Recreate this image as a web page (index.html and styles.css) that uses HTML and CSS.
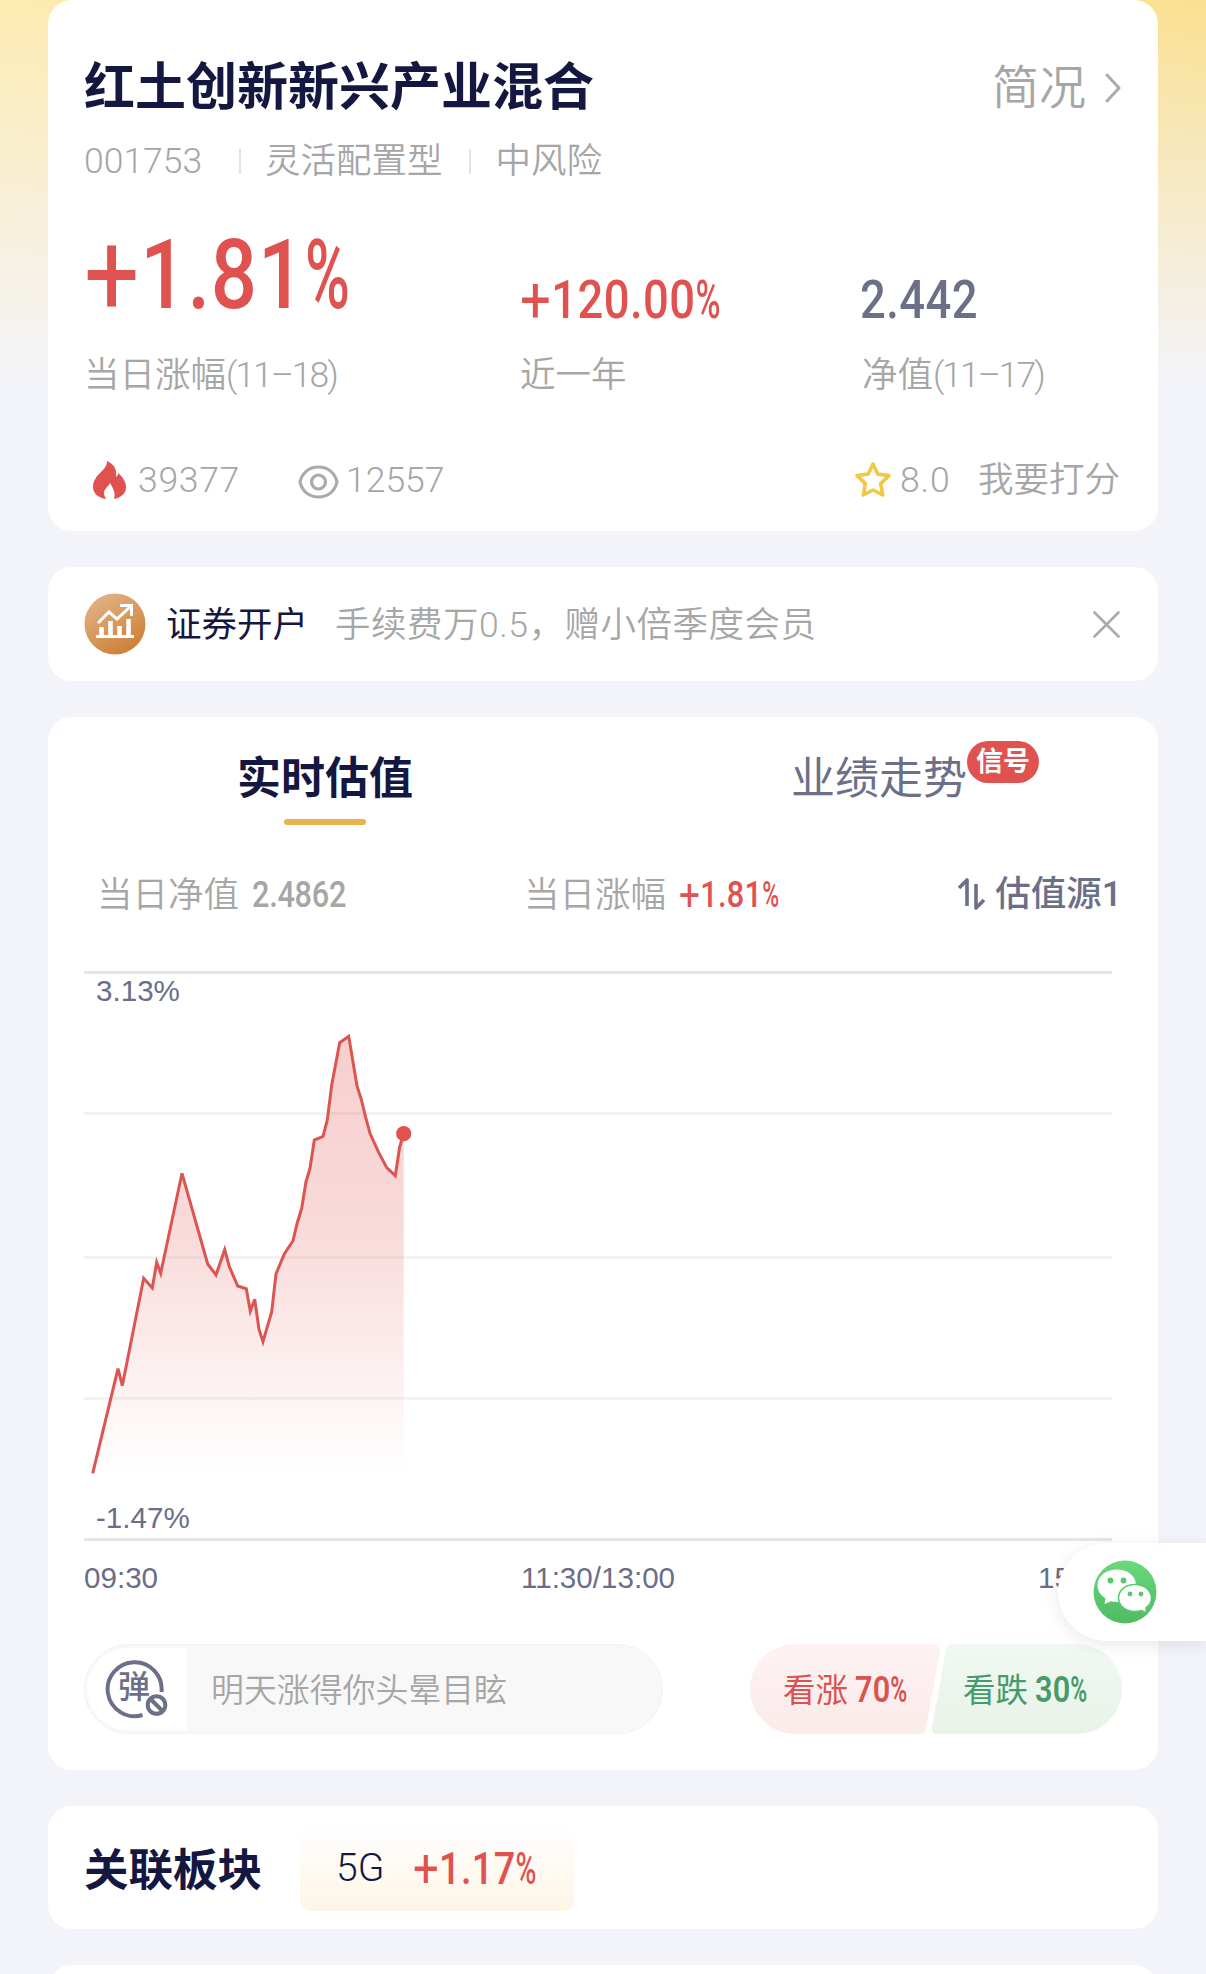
FILE: index.html
```html
<!DOCTYPE html>
<html lang="zh-CN">
<head>
  <meta charset="utf-8" />
  <meta name="viewport" content="width=device-width, initial-scale=1" />
  <title>红土创新新兴产业混合</title>
  <link rel="stylesheet" href="styles.css">
</head>
<body>
  <main class="page">
    <section class="card fund">
      <header class="fund-head">
        <h1>红土创新新兴产业混合</h1>
        <a class="more">简况
          <svg width="16" height="30" viewBox="0 0 16 30"><path d="M2 2l12 13L2 28" fill="none" stroke="#aaa" stroke-width="3" stroke-linecap="round" stroke-linejoin="round"/></svg>
        </a>
      </header>
      <div class="meta">
        <span class="code">001753</span><span class="type">灵活配置型</span><span class="risk">中风险</span>
      </div>
      <div class="figures">
        <div><b class="num num-xl up"><span class="plus">+</span>1.81<span class="pct">%</span></b><span class="label">当日涨幅<span class="date">(11–18)</span></span></div>
        <div><b class="num num-l up"><span class="plus">+</span>120.00<span class="pct">%</span></b><span class="label">近一年</span></div>
        <div><b class="num num-l nav">2.442</b><span class="label">净值<span class="date">(11–17)</span></span></div>
      </div>
      <div class="counts">
        <svg class="fire" width="33" height="38" viewBox="0 0 33 38"><path d="M14 0c7 3 10 8 9 16 2-1 2-3 2-4 5 4 8 9 8 14 0 6-4 10-12 12 2-6-1-11-4-16-2 4-6 6-6 10 0 2 1 4 2 6C5 37 0 32 0 26c0-6 3-10 8-15 3-3 6-6 6-11z" fill="#e0524f"/></svg>
        <span class="hot">39377</span>
        <svg class="eye" width="41" height="34" viewBox="0 0 41 34" fill="none" stroke="#aaa" stroke-width="3.2"><path d="M2 17C4 8 11 2 20.500 2S37 8 39 17C37 26 30 32 20.500 32S4 26 2 17z"/><circle cx="20.500" cy="17" r="7"/></svg>
        <span class="views">12557</span>
        <svg class="star" width="38" height="38" viewBox="0 0 38 38"><path d="M19 3l4.700 10 11.300 1.600-8.300 8 2 11.400L19 29l-9.700 5 2-11.400-8.300-8L14.300 13z" fill="none" stroke="#f2c744" stroke-width="3.600" stroke-linejoin="round"/></svg>
        <span class="score">8.0</span>
        <span>我要打分</span>
      </div>
    </section>

    <section class="card notice">
      <svg width="62" height="62" viewBox="0 0 62 62">
        <defs><linearGradient id="gold" x1="0" y1="0" x2=".6" y2="1"><stop offset="0" stop-color="#e3b891"/><stop offset="1" stop-color="#cf8238"/></linearGradient></defs>
        <circle cx="31" cy="31" r="30.500" fill="url(#gold)"/>
        <path d="M12 43.500h38" fill="none" stroke="#fff" stroke-width="3"/>
        <path d="M17.500 44V34M26.500 44V28M35.500 44V33M44.500 44V26" fill="none" stroke="#fff" stroke-width="4.600"/>
        <path d="M14 30l11-11 8 7 14-13M36 12.500h11.500V23" fill="none" stroke="#fff" stroke-width="3"/>
      </svg>
      <strong>证券开户</strong>
      <span>手续费万0.5，赠小倍季度会员</span>
      <svg class="close" width="27" height="27" viewBox="0 0 27 27"><path d="M1.500 1.500l24 24M25.500 1.500l-24 24" stroke="#aaa" stroke-width="2.600" stroke-linecap="round"/></svg>
    </section>

    <section class="card trend">
      <nav class="tabs">
        <a class="tab active">实时估值</a>
        <a class="tab">业绩走势<i class="badge">信号</i></a>
      </nav>
      <div class="summary">
        <div class="sum-a">当日净值<b class="num num-s">2.4862</b></div>
        <div class="sum-b">当日涨幅<b class="num num-s up"><span class="plus">+</span>1.81<span class="pct">%</span></b></div>
        <div class="source">
          <svg width="28" height="34" viewBox="0 0 28 34"><path d="M1 11l8-8v26M26 23l-8 8V7" fill="none" stroke="#6b7088" stroke-width="3.600" stroke-linejoin="round"/></svg>估值源1
        </div>
      </div>

      <div class="chart">
        <svg width="1028" height="571" viewBox="0 0 1028 571">
          <defs>
            <linearGradient id="area" gradientUnits="userSpaceOnUse" x1="0" y1="66" x2="0" y2="503">
              <stop offset="0" stop-color="#e0524f" stop-opacity=".28"/>
              <stop offset=".45" stop-color="#e0524f" stop-opacity=".21"/>
              <stop offset="1" stop-color="#e0524f" stop-opacity="0"/>
            </linearGradient>
          </defs>
          <path d="M0 143.500H1028M0 287.500H1028M0 428.500H1028" stroke="#f3f3f5" stroke-width="3"/>
          <path d="M0 2.500H1028M0 569.500H1028" stroke="#e5e5ea" stroke-width="3"/>
          <path id="fill" fill="url(#area)"/>
          <polyline id="line" fill="none" stroke="#dc5551" stroke-width="3"/>
          <circle cx="319.700" cy="163.700" r="7.600" fill="#e0524f"/>
        </svg>
        <span class="max">3.13%</span>
        <span class="min">-1.47%</span>
      </div>
      <div class="times"><span>09:30</span><span>11:30/13:00</span><span>15:00</span></div>

      <div class="bottom">
        <div class="danmu">
          <div class="danmu-switch">
            <svg width="66" height="62" viewBox="0 0 66 62">
              <g fill="none" stroke="#6b7088" stroke-width="4">
                <path d="M37.500 57A27 27 0 1 1 56.500 34"/>
                <circle cx="51.500" cy="47" r="8.800"/>
                <path d="M45.500 41l12 12"/>
              </g>
              <text x="13" y="40" class="danmu-char">弹</text>
            </svg>
          </div>
          <span>明天涨得你头晕目眩</span>
        </div>
        <div class="vote">
          <svg width="372" height="90" viewBox="0 0 372 90">
            <defs>
              <linearGradient id="bull" x1="0" y1="0" x2="0" y2="1"><stop offset="0" stop-color="#fdf2f3"/><stop offset="1" stop-color="#fbebea"/></linearGradient>
              <linearGradient id="bear" x1="0" y1="0" x2="0" y2="1"><stop offset="0" stop-color="#f1f8f3"/><stop offset="1" stop-color="#e8f3e8"/></linearGradient>
            </defs>
            <path d="M45 0H184Q191 0 190 7L176 84Q175 90 169 90H45A45 45 0 0 1 45 0z" fill="url(#bull)"/>
            <path d="M203 0H327A45 45 0 0 1 327 90H188Q181 90 182 83L196 6Q197 0 203 0z" fill="url(#bear)"/>
          </svg>
          <div class="vote-text"><span class="bull">看涨<b class="num num-s">70<span class="pct">%</span></b></span><span class="bear">看跌<b class="num num-s">30<span class="pct">%</span></b></span></div>
        </div>
      </div>
    </section>

    <section class="card sector">
      <h2>关联板块</h2>
      <div class="tag"><span class="name">5G</span><b class="num num-m up"><span class="plus">+</span>1.17<span class="pct">%</span></b></div>
    </section>

    <section class="card next"></section>
  </main>

  <div class="wechat">
    <svg width="64" height="64" viewBox="0 0 64 64">
      <defs><linearGradient id="wx" x1="0" y1="0" x2="0" y2="1"><stop offset="0" stop-color="#6ad97c"/><stop offset="1" stop-color="#4fbb63"/></linearGradient></defs>
      <circle cx="32" cy="32" r="31.500" fill="url(#wx)"/>
      <path d="M24 9.500c11 0 19 6.500 19 16S35 42 24 42c-2 0-4-.2-6-.8L11.500 44l1-5.800C7.500 35 4.500 31 4.500 25.500c0-9.500 8.500-16 19.500-16z" fill="#fff"/>
      <path d="M42 24.500c9.500 0 16.500 6 16.500 13.500 0 4-2 7.500-5.500 10l.6 5-5-2.500c-2 .6-4.300 1-6.600 1-9.500 0-16.500-6-16.500-13.500s7-13.500 16.500-13.500z" fill="#fff" stroke="#5cc870" stroke-width="1.600"/>
      <g fill="#58c66b"><circle cx="17.500" cy="20.500" r="2.900"/><circle cx="30.500" cy="20.500" r="2.900"/><circle cx="37" cy="34" r="2.400"/><circle cx="48" cy="34" r="2.400"/></g>
    </svg>
  </div>

  <script>
    // intraday estimate, in chart pixels
    const points = [
      [8.7,503.3],[34,398.7],[38.3,415.7],[59.7,308.3],[68.3,318],[72.7,292.3],[76.7,303.3],[98,203.3],
      [123.7,294],[132,305],[140.7,279.7],[145.3,296.7],[153.7,316],[162.3,318.7],[166.3,341.3],[170.7,329.3],
      [175,359.3],[179,371.7],[187.7,341.7],[192,304],[200.3,284],[209,270.7],[213.3,252.7],[217.7,238.3],
      [222,211.7],[226,198.3],[230.3,170],[239,166.3],[243.3,150],[247.7,115],[255.7,72.7],[264.7,66.3],
      [273,116],[277.3,129.3],[281.7,147.3],[286,163.3],[294.3,181.7],[302.7,197.7],[311.3,205.7],[315.7,176.7],[319.7,163.7]
    ];
    const line = points.map(p => p.join(',')).join(' ');
    document.getElementById('line').setAttribute('points', line);
    document.getElementById('fill').setAttribute('d', `M${line} V503H8.7z`);
  </script>
</body>
</html>
```
FILE: styles.css
```css
*{box-sizing:border-box}
body{margin:0;height:1974px;overflow:hidden;background:linear-gradient(rgba(243,244,250,0),#f3f4fa 385px),linear-gradient(90deg,#fdebb2,#fae092);color:#14173f;font-family:Roboto,"Noto Sans CJK SC",sans-serif;font-size:35.5px;position:relative}
h1,h2{margin:0;font-weight:500}
svg{display:block;flex:none}
.page{display:flex;flex-direction:column;gap:36px;padding:0 48px}
.card{background:#fff;border-radius:24px;padding:0 36px}

/* Roboto squeezed to a DIN-like width */
.num{display:inline-block;font-family:Roboto,sans-serif;font-weight:500;letter-spacing:.01em;transform:scaleX(.84);transform-origin:left;white-space:nowrap}
.plus{font-size:1.2em;font-weight:400;line-height:0;vertical-align:-.06em}
.pct{display:inline-block;transform:scaleX(.75);transform-origin:left}
.num-xl{font-size:97px}
.num-l{font-size:54px}
.num-m{font-size:45px}
.num-s{font-size:36.5px}
.up{color:#e0524f}
.nav{margin-left:-2px;color:#6b7088}

.fund{height:531px;color:#a6a6a6;font-weight:350}
.fund-head{display:flex;justify-content:space-between;height:124px;padding-top:52px;line-height:72px}
.fund-head h1{font-size:51px;font-weight:600;color:#14173f}
.more{display:flex;align-items:center;gap:19px;height:72px;padding-right:1px;font-size:47px}
.meta{display:flex;height:75px;line-height:75px}
.meta span+span{display:flex;align-items:center;height:75px}
.meta span+span::before{content:"";width:2px;height:25px;background:#e2e2e2}
.code{width:155px}
.type::before{margin-right:24px}
.risk::before{margin:0 25px 0 26px}
.figures{display:grid;grid-template-columns:436px 342px 1fr;height:206px}
.figures div{display:flex;flex-direction:column}
.figures .num{height:150px;line-height:202px}
.figures .num-xl{line-height:153px}
.label{line-height:52px}
.date{letter-spacing:-2px}
.counts{display:flex;align-items:center;height:68px;line-height:68px;margin-top:41px;padding-right:2px}
.fire{margin:0 12px 0 9px}
.hot{width:160px;letter-spacing:.7px}
.eye{margin:3px 7px 0 0}
.star{margin:0 8px 0 auto}
.score{width:78px;letter-spacing:.9px}

.notice{display:flex;align-items:center;height:114px;color:#a6a6a6;font-weight:350}
.notice strong{margin:-5px 27px 0 20px;color:#14173f;font-weight:400}
.notice span{margin-top:-5px;letter-spacing:.5px}
.close{margin:0 2px 0 auto}

.trend{height:1053px}
.tabs{display:grid;grid-template-columns:482px 1fr;height:139px}
.tab{position:relative;justify-self:center;height:108px;padding-top:10px;font-size:44px;line-height:104px;color:#6b7088;font-weight:400}
.tab:last-child{left:35px}
.active{color:#14173f;font-weight:600}
.active::after{content:"";position:absolute;left:50%;bottom:0;width:82px;height:6px;margin-left:-41px;border-radius:3px;background:#eab34f}
.badge{position:absolute;left:100%;top:24px;width:72px;height:42px;border-radius:21px;background:#e0524f;color:#fff;font-size:27px;font-style:normal;font-weight:600;line-height:43px;text-align:center}
.summary{display:flex;height:114px;line-height:77px;color:#a6a6a6;font-weight:350}
.summary .num{margin-left:13px}
.sum-a{width:440px;padding-left:13px}
.sum-a .num{letter-spacing:-.3px}
.source{display:flex;align-items:center;gap:9px;height:77px;margin-left:auto;color:#6b7088;font-weight:500}
.source svg{margin-top:-2px}

.chart{position:relative;height:571px}
.chart span,.times{font-family:"Liberation Sans",Arial,sans-serif;font-size:29.6px;line-height:36px;color:#6b6e88}
.chart span{position:absolute;left:12px}
.max{top:3px}
.min{bottom:5px}
.times{display:flex;justify-content:space-between;width:1028px;padding-top:19px}
.bottom{display:flex;justify-content:space-between;margin-top:48px}
.danmu{display:flex;align-items:center;width:579px;height:90px;padding-left:2px;border:1px solid #f2f2f2;border-radius:45px;background:#f8f8f8;color:#a6a6a6;font-size:32.9px;font-weight:350}
.danmu>span{margin-top:-3px}
.danmu-switch{width:100px;height:82px;margin-right:24px;padding:10px 0 0 18px;border-radius:41px 0 0 41px;background:#fff}
.danmu-char{font-size:32px;font-weight:500;fill:#6b7088}
.vote{position:relative;width:372px}
.vote-text{position:absolute;inset:0;display:flex;padding-left:33px;font-size:32.5px;line-height:92px}
.vote-text>span{width:180px;white-space:nowrap}
.bull{flex:none;color:#d9534f}
.vote .num{margin-left:7px;font-weight:600}
.vote .bear{margin-left:11px;width:150px;flex:none;color:#459b69}
.vote .bull{width:169px}

.sector{display:flex;align-items:center;height:123px}
.sector h2{margin-top:-3px;font-size:44.500px;font-weight:600}
.tag{display:flex;align-items:center;width:274px;height:86px;margin:0 0 -1px 38px;padding-left:36px;border-radius:10px;background:linear-gradient(#fff,#fef5e6)}
.name{width:77px;font-size:39px;font-weight:300}
.next{height:60px}

.wechat{position:absolute;right:0;top:1543px;width:148px;height:98px;padding:17px 0 0 35px;border-radius:49px 0 0 49px;background:#fff;box-shadow:0 4px 18px rgba(0,0,0,.09)}
```
